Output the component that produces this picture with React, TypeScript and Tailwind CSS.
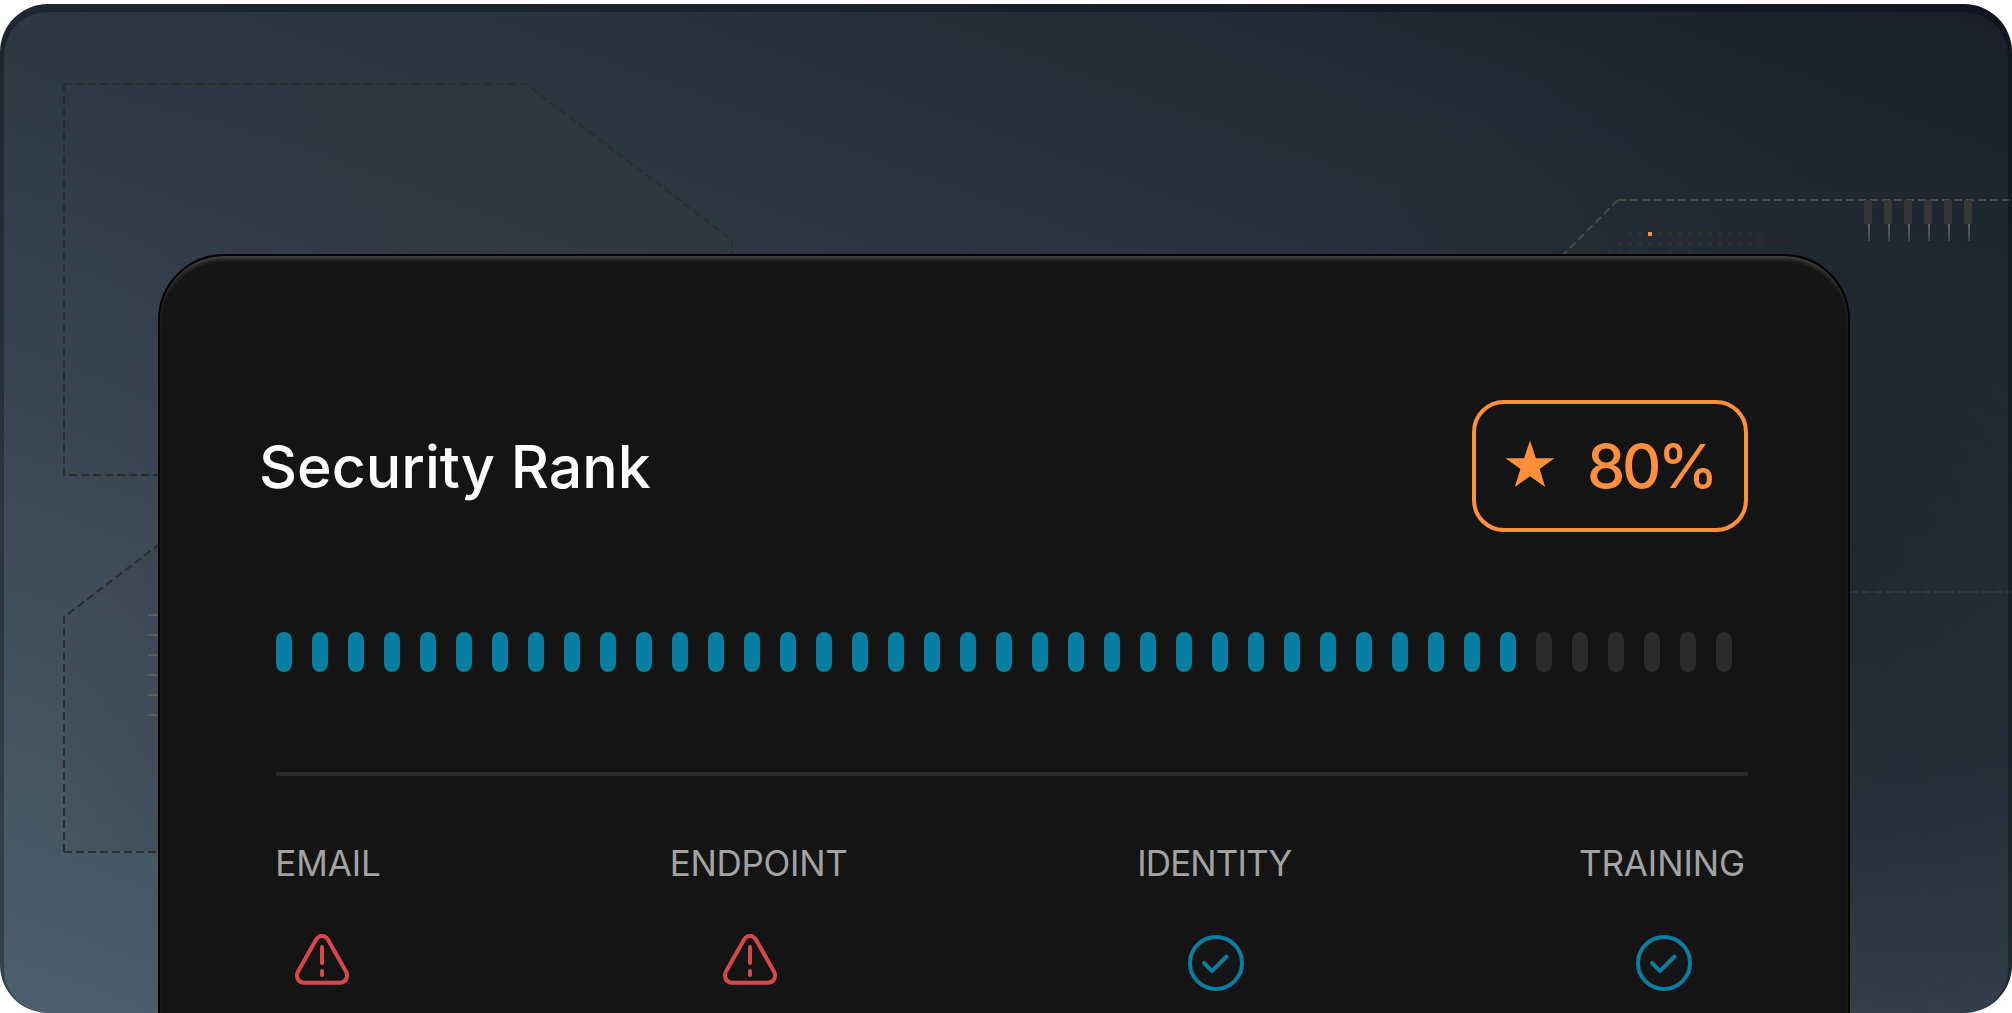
import clsx from "clsx";

const TOTAL_BARS = 41;
const FILLED_BARS = 35;

const AlertIcon = () => (
    <svg width="54" height="51" viewBox="0 0 54 51" fill="none" stroke="#d94848" strokeWidth="4" strokeLinecap="round">
        <path d="M20.6 6.5 C23.4 0.5 30.6 0.5 33.4 6.5 L51 37.5 C54 43.5 50 48.8 44.8 48.8 H9.2 C4 48.8 0 43.5 3 37.5 Z" strokeLinejoin="round" />
        <path d="M27 13 V29" />
        <path d="M27 37 V41" />
    </svg>
);

const CheckIcon = () => (
    <svg width="56" height="56" viewBox="0 0 56 56" fill="none" stroke="#087ea0" strokeWidth="4">
        <circle cx="28" cy="28" r="26" />
        <path d="M16 28 L24 36 L38.5 21.5" strokeLinecap="round" />
    </svg>
);

const StarIcon = () => (
    <svg className="mb-[5px]" width="50" height="48" viewBox="0 0 50 48" fill="#ff8f3a">
        <path d="M25 0.5 L30.9 18.3 H49.5 L34.6 29.1 L40.2 47 L25 36.2 L9.8 47 L15.4 29.1 L0.5 18.3 H19.1 Z" />
    </svg>
);

const Backdrop = () => (
    <svg className="absolute inset-0" width="2012" height="1013" viewBox="0 0 2012 1013" fill="none">
        <defs>
            <linearGradient id="glow" x1="0" y1="0" x2="1" y2="0">
                <stop stopColor="#37393a" stopOpacity="0.02" />
                <stop offset="0.6" stopColor="#37393a" stopOpacity="0.2" />
                <stop offset="1" stopColor="#37393a" stopOpacity="0.15" />
            </linearGradient>
            <linearGradient id="shade" x1="64" y1="0" x2="158" y2="0" gradientUnits="userSpaceOnUse">
                <stop stopColor="#2c2c38" stopOpacity="0.06" />
                <stop offset="1" stopColor="#2c2c38" stopOpacity="0.14" />
            </linearGradient>
            <linearGradient id="pin" x1="0" y1="224" x2="0" y2="241" gradientUnits="userSpaceOnUse">
                <stop stopColor="#59616a" />
                <stop offset="1" stopColor="#3d454e" />
            </linearGradient>
        </defs>
        <path d="M64 84 H526 L732 240 V475 H64 Z" fill="url(#glow)" />
        <path d="M64 617 L200 513 V852 H64 Z" fill="url(#shade)" />
        <g stroke="#2c2c2c" strokeWidth="2" strokeDasharray="8 4">
            <path d="M64 84 H526 L732 240 V475" />
            <path d="M64 84 V475 H732" />
            <path d="M64 852 V617 L200 513" />
            <path d="M64 852 H200" />
        </g>
        <g stroke="#4a4b4d" strokeWidth="2" strokeDasharray="8 4">
            <path d="M1618 200 H2012" />
            <path d="M1618 200 L1560 258" />
        </g>
        <path d="M1838 592 H2012" stroke="#353436" strokeWidth="2" strokeDasharray="8 4" />
        {[0, 1, 2, 3, 4, 5].map((i) => (
            <g key={i}>
                <rect x={1864 + i * 20} y="200" width="8" height="24" fill="#373737" />
                <rect x={1868 + i * 20} y="224" width="2" height="17" fill="url(#pin)" />
                <rect x="148" y={614 + i * 20} width="12" height="2" fill="#5b5d63" />
            </g>
        ))}
        {[0, 1, 2].map((row) =>
            Array.from({ length: 14 + row }, (_, i) => (
                <rect
                    key={`${row}-${i}`}
                    x={1758 - i * 10}
                    y={232 + row * 10}
                    width="4"
                    height="4"
                    fill={row === 0 && i === 11 ? "#ff8f3a" : "#303030"}
                    opacity={row === 0 && i === 11 ? 1 : 0.5 + i * 0.035}
                />
            ))
        )}
    </svg>
);

const categories = [
    { name: "EMAIL", ok: false, column: "w-[104px]", offset: "-ml-3", tracking: "tracking-[-0.1px]" },
    { name: "ENDPOINT", ok: false, column: "w-[180px]", offset: "-ml-[18px]", tracking: "tracking-[-0.3px]" },
    { name: "IDENTITY", ok: true, column: "w-[154px]", offset: "ml-1", tracking: "tracking-[-0.9px]" },
    { name: "TRAINING", ok: true, column: "w-[168px]", offset: "", tracking: "-ml-1 tracking-[-0.1px]" },
];

const App = () => {
    return (
        <div className="h-[1013px] w-[2012px] overflow-hidden bg-white pt-1 font-['Inter',sans-serif]">
            <div className="relative h-[1009px] overflow-hidden rounded-[48px] bg-[linear-gradient(200deg,#191e2a_0%,#242f3a_23%,#2b3844_42%,#33414e_57%,#3d4b58_71%,#4d606e_100%)]">
                <div className="absolute inset-0 bg-[radial-gradient(ellipse_560px_560px_at_90%_55%,rgba(28,33,43,0.7)_0%,rgba(28,35,45,0.45)_50%,transparent_100%)]"></div>
                <div className="absolute inset-x-0 -top-1 h-[1013px]">
                    <Backdrop />
                </div>
                <div className="absolute inset-0 rounded-[48px] shadow-[inset_0_4px_0_4px_rgba(0,0,0,0.3)]"></div>

                <main
                    className="
                        relative
                        ml-[158px] mt-[250px]
                        h-[820px] w-[1692px]
                        rounded-t-[66px]
                        border-2 border-black
                        bg-[#141414]
                        shadow-[inset_0_5px_4px_-2px_rgba(255,255,255,0.2)]
                    "
                >
                    <div className="flex items-center justify-between pl-[99px] pr-[100px] pt-36">
                        <h1 className="whitespace-nowrap text-[59px] font-medium leading-none text-white">Security Rank</h1>
                        <div className="flex h-[132px] w-[276px] items-center rounded-[32px] border-4 border-[#ff8f3a] pl-[29px]">
                            <StarIcon />
                            <span className="ml-8 whitespace-nowrap text-[61px] font-medium leading-none tracking-[-3.5px] text-[#ff8f3a]">80%</span>
                        </div>
                    </div>

                    <div className="ml-[116px] mt-[100px] flex gap-5">
                        {Array.from({ length: TOTAL_BARS }, (_, i) => (
                            <div
                                key={i}
                                className={clsx("h-10 w-4 rounded-full", i < FILLED_BARS ? "bg-[#087ea0]" : "bg-[#2b2b2b]")}
                            ></div>
                        ))}
                    </div>

                    <div className="ml-[116px] mt-[100px] h-1 w-[1472px] bg-[#2b2b2b]"></div>

                    <div className="ml-[116px] mt-[69px] flex w-[1472px] justify-between">
                        {categories.map((category) => (
                            <div key={category.name} className={clsx("flex flex-col items-center", category.column)}>
                                <span className={clsx("whitespace-nowrap text-[35px] leading-9 text-[#a3a3a3]", category.tracking)}>
                                    {category.name}
                                </span>
                                <div className={clsx(category.ok ? "mt-[54px]" : "mt-[53px]", category.offset)}>
                                    {category.ok ? <CheckIcon /> : <AlertIcon />}
                                </div>
                            </div>
                        ))}
                    </div>
                </main>
            </div>
        </div>
    );
};

export default App;
